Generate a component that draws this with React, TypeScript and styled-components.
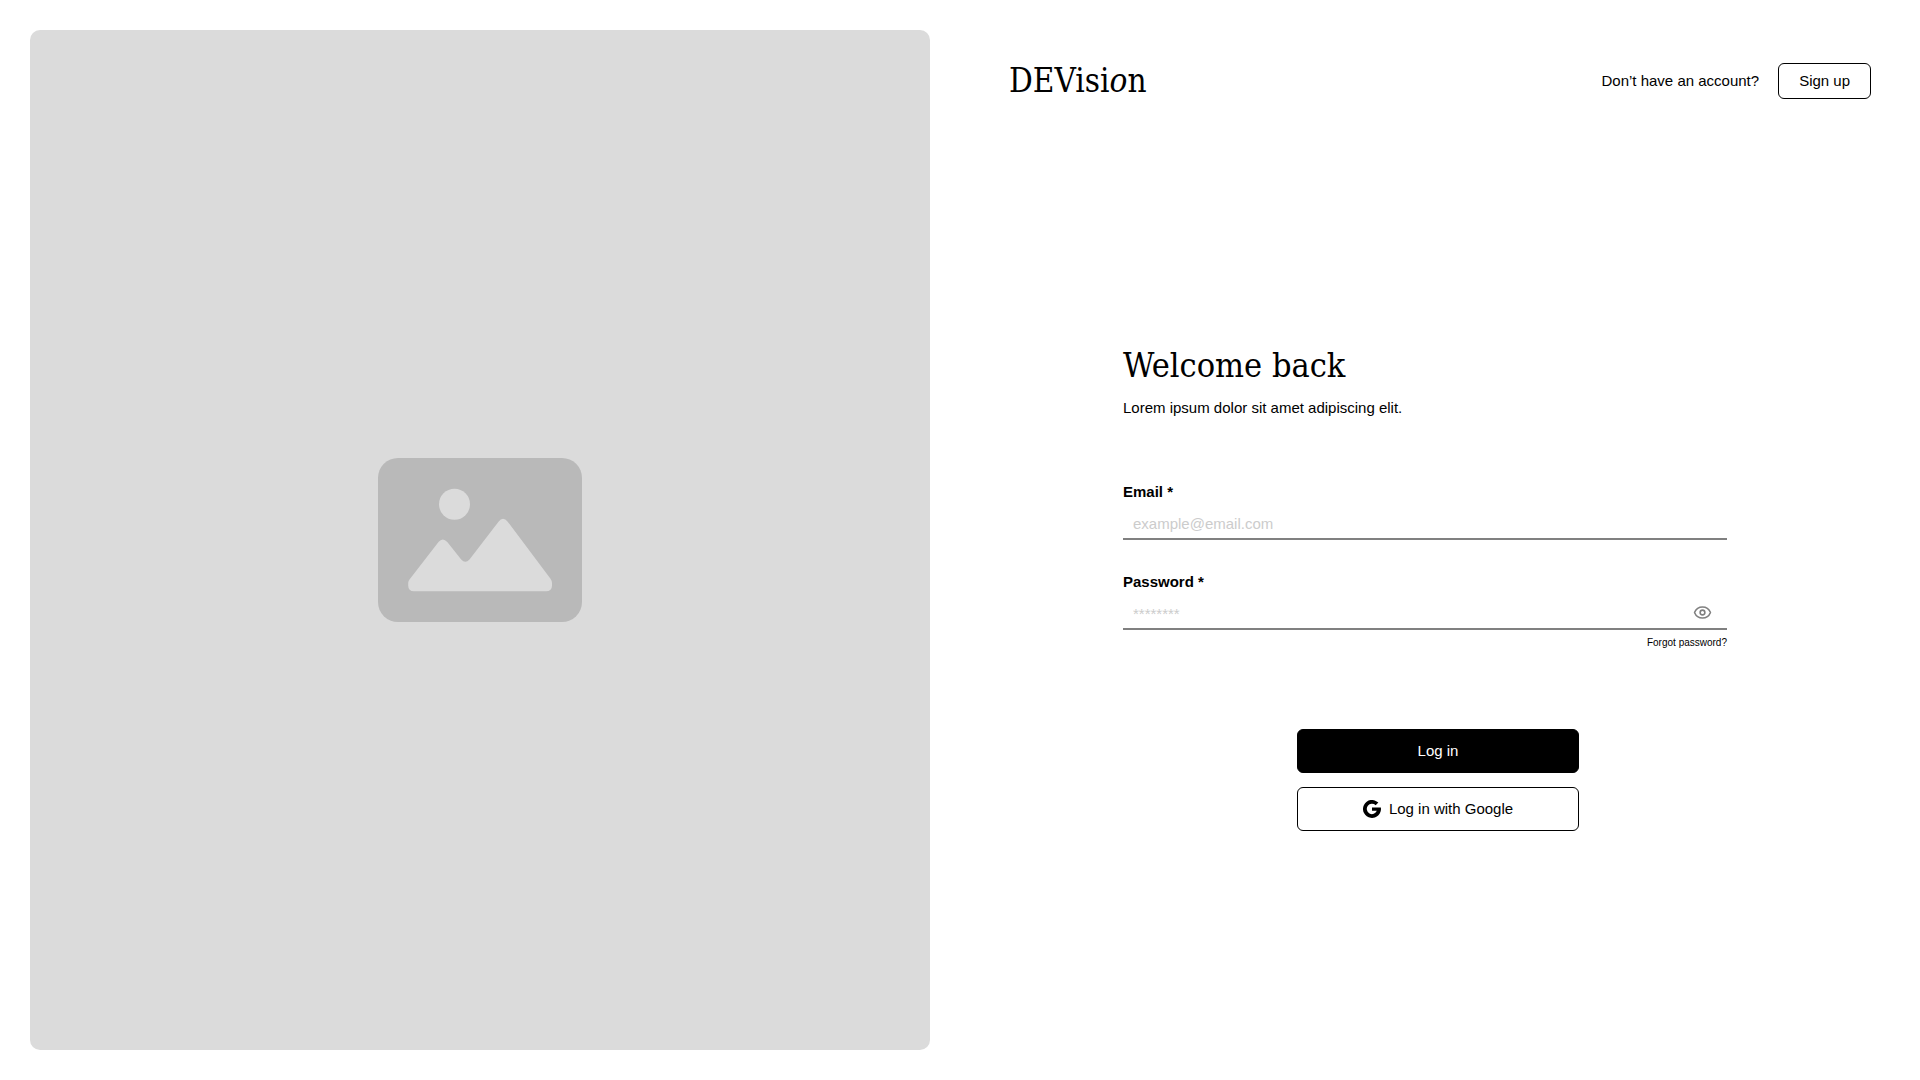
import React, { useState } from "react";
import styled, { createGlobalStyle, css } from "styled-components";
import { Eye } from "lucide-react";

const GlobalStyle = createGlobalStyle`
  *, *::before, *::after { box-sizing: border-box; }
  body {
    margin: 0;
    background: #fff;
    color: #000;
    font-family: "Liberation Sans", Arial, sans-serif;
    font-size: 15px;
    line-height: 18px;
  }
  button, input { font: inherit; color: inherit; }
`;

const serif = css`
  font-family: "DejaVu Serif Condensed", "DejaVu Serif", serif;
  font-weight: 400;
  line-height: 40px;
`;

const Page = styled.div`
  display: grid;
  grid-template-columns: 1fr 1fr;
  min-height: 100vh;
`;

const Media = styled.aside`
  display: flex;
  align-items: center;
  justify-content: center;
  margin: 30px;
  border-radius: 10px;
  background: #dbdbdb;
`;

const Panel = styled.div`
  display: flex;
  flex-direction: column;
`;

const Header = styled.header`
  display: flex;
  align-items: center;
  justify-content: space-between;
  height: 162px;
  padding: 0 49px;
`;

const Logo = styled.a`
  ${serif}
  font-size: 33px;
  color: inherit;
  text-decoration: none;
`;

const Account = styled.div`
  display: flex;
  align-items: center;
  gap: 19px;
`;

const Button = styled.button<{ $filled?: boolean; $small?: boolean }>`
  display: flex;
  align-items: center;
  justify-content: center;
  gap: 8px;
  width: ${(p) => (p.$small ? "auto" : "282px")};
  height: ${(p) => (p.$small ? "36px" : "44px")};
  padding: 0 20px;
  border: 1px solid #000;
  border-radius: 6px;
  background: ${(p) => (p.$filled ? "#000" : "#fff")};
  color: ${(p) => (p.$filled ? "#fff" : "#000")};
  cursor: pointer;
`;

const Main = styled.main`
  display: flex;
  flex: 1;
  justify-content: center;
  padding: 183px 54px 60px 50px;
`;

const Form = styled.form`
  width: 100%;
  max-width: 630px;
`;

const Title = styled.h1`
  ${serif}
  margin: 0 0 14px;
  font-size: 34px;
`;

const Intro = styled.p`
  margin: 0 0 66px;
`;

const Fields = styled.div`
  display: flex;
  flex-direction: column;
  gap: 33px;
  margin-right: 26px;
`;

const Field = styled.div`
  display: flex;
  flex-direction: column;
  gap: 8px;
`;

const Label = styled.label`
  font-weight: 700;
`;

const InputRow = styled.div`
  display: flex;
  height: 31px;
  padding-right: 15px;
  border-bottom: 2px solid #808080;
`;

const Input = styled.input`
  flex: 1;
  min-width: 0;
  height: 100%;
  padding: 0 10px;
  border: 0;
  outline: 0;
  background: transparent;
  &::placeholder { color: #ccc; opacity: 1; }
`;

const IconButton = styled.button`
  display: flex;
  align-items: center;
  height: 27px;
  padding: 0;
  border: 0;
  background: none;
  color: #808080;
  cursor: pointer;
`;

const Forgot = styled.a`
  display: block;
  width: fit-content;
  margin: 7px 26px 0 auto;
  font-size: 10px;
  line-height: 12px;
  color: inherit;
  text-decoration: none;
`;

const Actions = styled.div`
  display: flex;
  flex-direction: column;
  align-items: center;
  gap: 14px;
  margin-top: 80px;
`;

function PicturePlaceholder() {
  return (
    <svg width="204" height="164" viewBox="0 0 204 164" aria-hidden="true">
      <rect width="204" height="164" rx="20" fill="#b9b9b9" />
      <circle cx="76.5" cy="46.3" r="15.5" fill="#dbdbdb" />
      <path
        fill="#dbdbdb"
        d="M31.5 121.5L60.5 84Q64.7 78.8 69.3 84L83.2 101.5Q87.3 106 91.5 101.5L120.500 63.700Q125 58 129.700 63.700L172.500 120.800Q174 123 174 125V127.500Q174 133.300 168 133.300H36Q30.200 133.300 30.200 127.500V125Q30.200 123 31.500 121.500Z"
      />
    </svg>
  );
}

function GoogleMark() {
  return (
    <svg width="18" height="18" viewBox="0 0 18 18" fill="currentColor" aria-hidden="true">
      <path d="M9 7.4H17.85A9 9 0 1 1 15.35 2.6L12.65 5.2A5.2 5.2 0 1 0 13.85 10.8H9Z" />
    </svg>
  );
}

export default function App() {
  const [visible, setVisible] = useState(false);
  return (
    <>
      <GlobalStyle />
      <Page>
        <Media>
          <PicturePlaceholder />
        </Media>
        <Panel>
          <Header>
            <Logo href="#">
              DEVisi<i>o</i>n
            </Logo>
            <Account>
              <span>Don’t have an account?</span>
              <Button type="button" $small>Sign up</Button>
            </Account>
          </Header>
          <Main>
            <Form onSubmit={(e) => e.preventDefault()}>
              <Title>Welcome back</Title>
              <Intro>Lorem ipsum dolor sit amet adipiscing elit.</Intro>
              <Fields>
                <Field>
                  <Label htmlFor="email">Email *</Label>
                  <InputRow>
                    <Input id="email" type="email" placeholder="example@email.com" />
                  </InputRow>
                </Field>
                <Field>
                  <Label htmlFor="password">Password *</Label>
                  <InputRow>
                    <Input id="password" type={visible ? "text" : "password"} placeholder="********" />
                    <IconButton type="button" aria-label="Show password" onClick={() => setVisible(!visible)}>
                      <Eye size={19} />
                    </IconButton>
                  </InputRow>
                </Field>
              </Fields>
              <Forgot href="#">Forgot password?</Forgot>
              <Actions>
                <Button type="submit" $filled>Log in</Button>
                <Button type="button">
                  <GoogleMark />
                  Log in with Google
                </Button>
              </Actions>
            </Form>
          </Main>
        </Panel>
      </Page>
    </>
  );
}
